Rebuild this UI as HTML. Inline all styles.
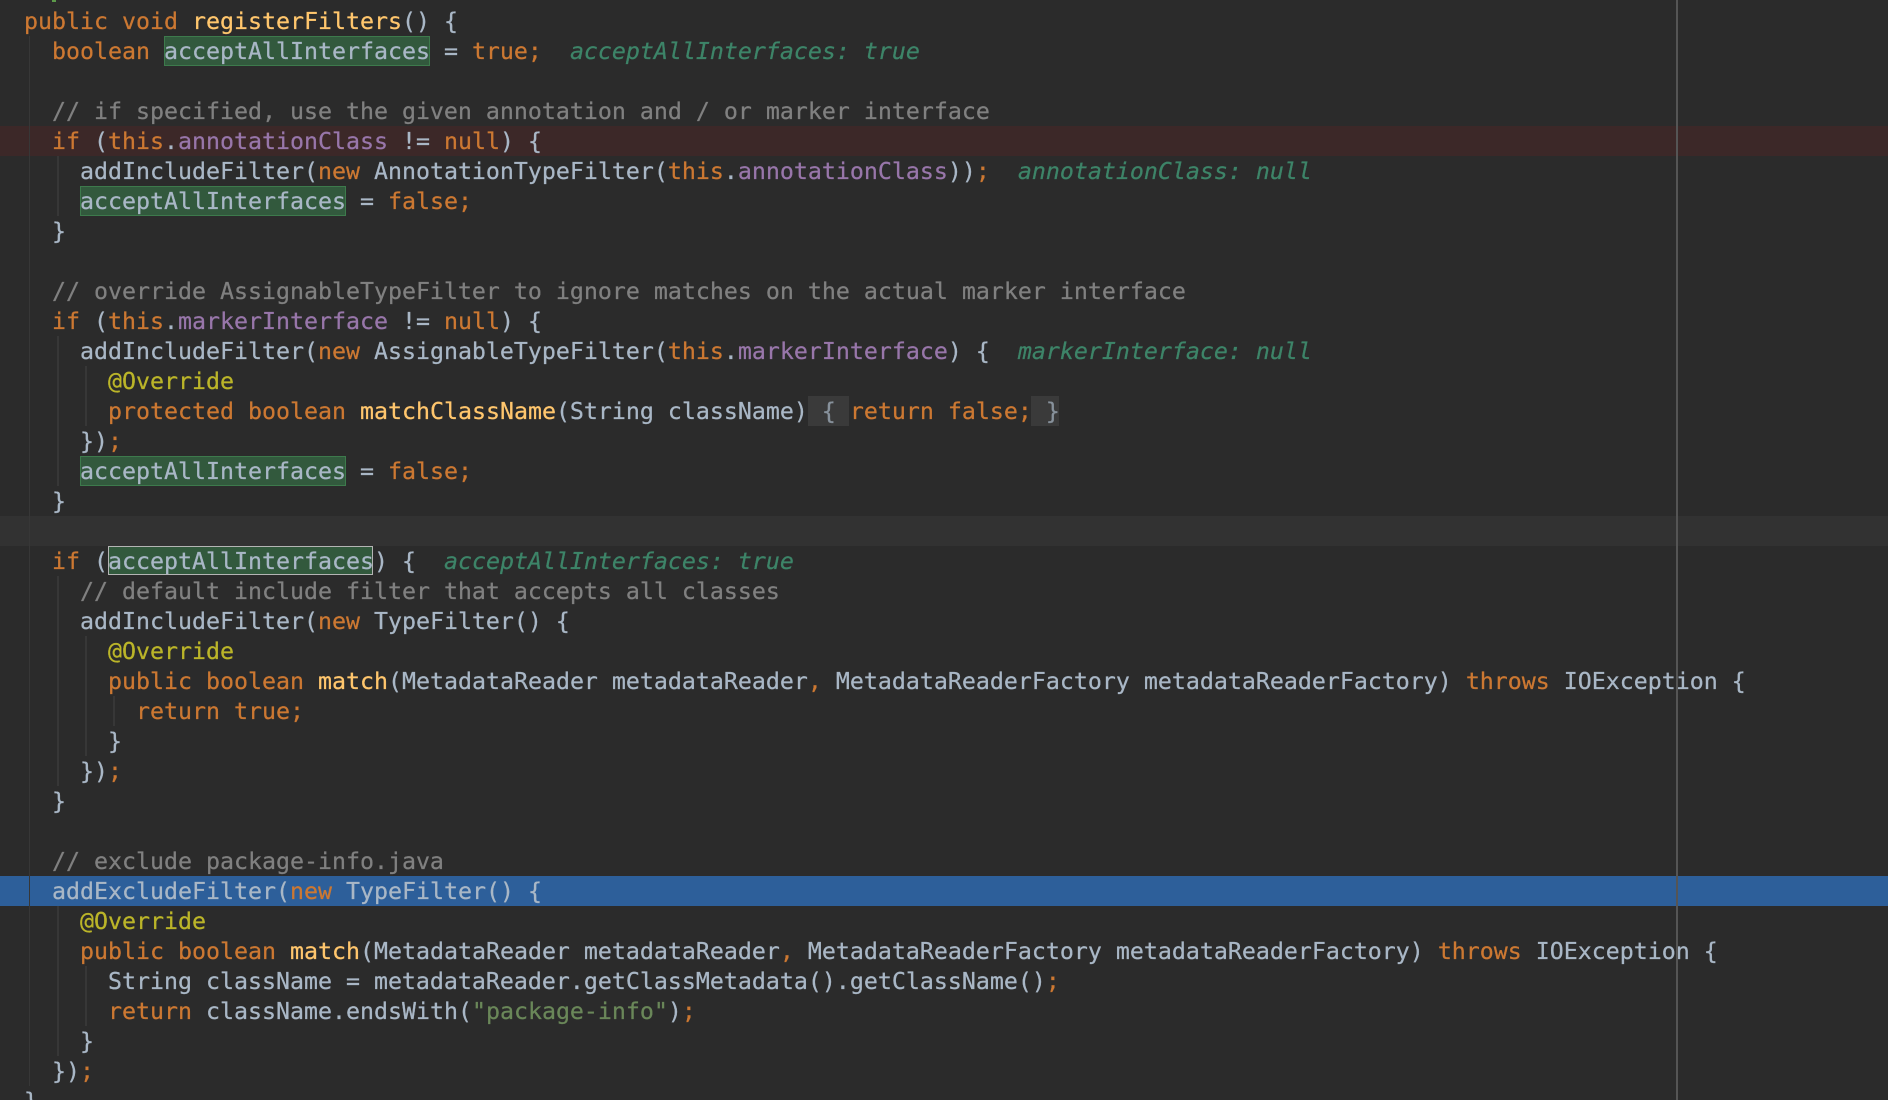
<!DOCTYPE html>
<html lang="en"><head><meta charset="utf-8"><title>registerFilters</title>
<style>
html,body{margin:0;padding:0;background:#2b2b2b}
#e{position:relative;width:1888px;height:1100px;overflow:hidden;background:#2b2b2b;font-family:"DejaVu Sans Mono","Liberation Mono",monospace;font-size:23.25px;line-height:30px;color:#a9b7c6;-webkit-text-stroke:.25px}
.r{position:absolute;left:0;width:1888px;height:30px}
.g{position:absolute;width:1.5px;background:#373737}
.l{position:absolute;left:24px;white-space:pre;height:30px;margin-top:1px}
.m{position:absolute;left:1676px;top:0;width:2px;height:1100px;background:#555}
.b{position:absolute;height:28px;background:#32593d;border:1px solid #3d7a4c}
.c{position:absolute;height:27px;background:#32593d;border:1.5px solid #b4b4b4}
.f{position:absolute;height:30px;background:#3a3a3a}
i{font-style:normal}
.k{color:#cc7832}.n{color:#ffc66d}.p{color:#9876aa}.t{color:#808080}.a{color:#bbb529}.s{color:#6a8759}.d{color:#87919b}
.h{color:#3d8468;font-style:italic}
</style></head><body><div id="e">
<div class="r" style="top:126px;background:#3c2828"></div>
<div class="r" style="top:516px;background:#323232"></div>
<div class="r" style="top:876px;background:#2d5f9a"></div>
<div class="g" style="left:28.5px;top:36px;height:1050px"></div>
<div class="g" style="left:57px;top:156px;height:60px"></div>
<div class="g" style="left:57px;top:336px;height:150px"></div>
<div class="g" style="left:57px;top:576px;height:210px"></div>
<div class="g" style="left:57px;top:906px;height:150px"></div>
<div class="g" style="left:85px;top:366px;height:60px"></div>
<div class="g" style="left:85px;top:636px;height:120px"></div>
<div class="g" style="left:85px;top:966px;height:60px"></div>
<div class="g" style="left:113px;top:696px;height:30px"></div>
<div class="b" style="left:164px;top:36px;width:264px"></div>
<div class="b" style="left:80px;top:186px;width:264px"></div>
<div class="b" style="left:80px;top:456px;width:264px"></div>
<div class="c" style="left:108px;top:546px;width:263px"></div>
<div class="f" style="left:808px;top:396px;width:41px"></div>
<div class="f" style="left:1031px;top:396px;width:28px"></div>
<div style="position:absolute;left:52px;top:0;width:4px;height:2px;background:#5c9a4a"></div>
<div class="l" style="top:6px"><i class="k">public void </i><i class="n">registerFilters</i>() {</div>
<div class="l" style="top:36px">  <i class="k">boolean </i>acceptAllInterfaces = <i class="k">true;</i>  <i class="h">acceptAllInterfaces: true</i></div>
<div class="l" style="top:96px">  <i class="t">// if specified, use the given annotation and / or marker interface</i></div>
<div class="l" style="top:126px">  <i class="k">if </i>(<i class="k">this</i>.<i class="p">annotationClass</i> != <i class="k">null</i>) {</div>
<div class="l" style="top:156px">    addIncludeFilter(<i class="k">new </i>AnnotationTypeFilter(<i class="k">this</i>.<i class="p">annotationClass</i>))<i class="k">;</i>  <i class="h">annotationClass: null</i></div>
<div class="l" style="top:186px">    acceptAllInterfaces = <i class="k">false;</i></div>
<div class="l" style="top:216px">  }</div>
<div class="l" style="top:276px">  <i class="t">// override AssignableTypeFilter to ignore matches on the actual marker interface</i></div>
<div class="l" style="top:306px">  <i class="k">if </i>(<i class="k">this</i>.<i class="p">markerInterface</i> != <i class="k">null</i>) {</div>
<div class="l" style="top:336px">    addIncludeFilter(<i class="k">new </i>AssignableTypeFilter(<i class="k">this</i>.<i class="p">markerInterface</i>) {  <i class="h">markerInterface: null</i></div>
<div class="l" style="top:366px">      <i class="a">@Override</i></div>
<div class="l" style="top:396px">      <i class="k">protected boolean </i><i class="n">matchClassName</i>(String className) <i class="d">{</i> <i class="k">return false;</i> <i class="d">}</i></div>
<div class="l" style="top:426px">    })<i class="k">;</i></div>
<div class="l" style="top:456px">    acceptAllInterfaces = <i class="k">false;</i></div>
<div class="l" style="top:486px">  }</div>
<div class="l" style="top:546px">  <i class="k">if </i>(acceptAllInterfaces) {  <i class="h">acceptAllInterfaces: true</i></div>
<div class="l" style="top:576px">    <i class="t">// default include filter that accepts all classes</i></div>
<div class="l" style="top:606px">    addIncludeFilter(<i class="k">new </i>TypeFilter() {</div>
<div class="l" style="top:636px">      <i class="a">@Override</i></div>
<div class="l" style="top:666px">      <i class="k">public boolean </i><i class="n">match</i>(MetadataReader metadataReader<i class="k">,</i> MetadataReaderFactory metadataReaderFactory) <i class="k">throws </i>IOException {</div>
<div class="l" style="top:696px">        <i class="k">return true;</i></div>
<div class="l" style="top:726px">      }</div>
<div class="l" style="top:756px">    })<i class="k">;</i></div>
<div class="l" style="top:786px">  }</div>
<div class="l" style="top:846px">  <i class="t">// exclude package-info.java</i></div>
<div class="l" style="top:876px">  addExcludeFilter(<i class="k">new </i>TypeFilter() {</div>
<div class="l" style="top:906px">    <i class="a">@Override</i></div>
<div class="l" style="top:936px">    <i class="k">public boolean </i><i class="n">match</i>(MetadataReader metadataReader<i class="k">,</i> MetadataReaderFactory metadataReaderFactory) <i class="k">throws </i>IOException {</div>
<div class="l" style="top:966px">      String className = metadataReader.getClassMetadata().getClassName()<i class="k">;</i></div>
<div class="l" style="top:996px">      <i class="k">return </i>className.endsWith(<i class="s">"package-info"</i>)<i class="k">;</i></div>
<div class="l" style="top:1026px">    }</div>
<div class="l" style="top:1056px">  })<i class="k">;</i></div>
<div class="l" style="top:1086px">}</div>
<div class="m"></div>
</div></body></html>
